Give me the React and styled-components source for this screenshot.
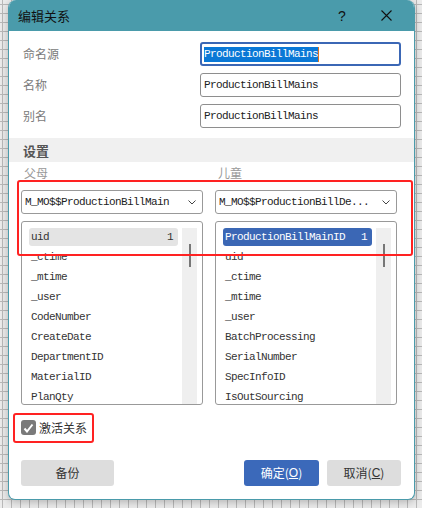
import React from "react";
import styled, { createGlobalStyle } from "styled-components";

const GlobalStyle = createGlobalStyle`
  html, body {
    margin: 0;
    padding: 0;
  }
  body {
    width: 422px;
    height: 508px;
    overflow: hidden;
    font-family: "Noto Sans CJK SC", "Noto Sans", sans-serif;
    background-color: #ececec;
    background-image:
      linear-gradient(to right, #b9b9b9 1px, transparent 1px),
      linear-gradient(to bottom, #b9b9b9 1px, transparent 1px);
    background-size: 9px 9px;
    background-position: 2px 4px;
  }
`;

const mono = `"Liberation Mono", "DejaVu Sans Mono", monospace`;

const Desktop = styled.div`
  width: 422px;
  height: 508px;
  padding-left: 8px;
  box-sizing: border-box;
`;

const Dialog = styled.div`
  position: relative;
  width: 407px;
  height: 500px;
  box-sizing: border-box;
  background: #fff;
  border: 1px solid #4a9bab;
  border-top: none;
  border-radius: 8px 8px 7px 7px;
  box-shadow: 0 2px 8px rgba(0, 0, 0, 0.25);
  display: flex;
  flex-direction: column;
  overflow: hidden;
`;

const TitleBar = styled.div`
  height: 31px;
  flex: none;
  background: #4a9bab;
  display: flex;
  align-items: center;
  padding: 0 16px 0 9px;
  font-size: 13px;
  line-height: 1;
  color: #111;
`;

const Title = styled.div`
  flex: 1;
`;

const TitleButton = styled.div`
  width: 24px;
  display: flex;
  justify-content: center;
  margin-left: ${({ $gap }) => $gap}px;
  font-family: "Liberation Sans", sans-serif;
  font-size: 14px;
`;

const Fields = styled.div`
  display: flex;
  flex-direction: column;
  gap: 7px;
  padding: 11px 13px 10px 14px;
`;

const FieldRow = styled.div`
  display: flex;
  align-items: center;
  height: 24px;
`;

const Label = styled.div`
  flex: 1;
  font-size: 12px;
  line-height: 1;
  color: #7a7a7a;
`;

const TextBox = styled.div`
  width: 201px;
  height: 24px;
  box-sizing: border-box;
  border: ${({ $focused }) => ($focused ? "2px solid #3b67b5" : "1px solid #8e8e8e")};
  border-radius: 3px;
  display: flex;
  align-items: center;
  padding-left: ${({ $focused }) => ($focused ? 2 : 3)}px;
  font-family: ${mono};
  font-size: 11px;
  letter-spacing: -0.6px;
  color: #222;
`;

const Selected = styled.span`
  background: #0a78d6;
  color: #fff;
  border-right: 1px solid #e0741e;
  line-height: 15px;
`;

const SectionHeader = styled.div`
  height: 24px;
  background: #f0f0f0;
  display: flex;
  align-items: center;
  padding-left: 14px;
  font-size: 13px;
  line-height: 1;
  font-weight: bold;
  color: #555;
`;

const Columns = styled.div`
  display: grid;
  grid-template-columns: 182px 182px;
  column-gap: 12px;
  padding: 3px 0 0 12px;
`;

const Column = styled.div`
  display: flex;
  flex-direction: column;
`;

const ColumnLabel = styled.div`
  height: 25px;
  font-size: 12px;
  color: #999;
  padding-left: 3px;
  line-height: 16px;
`;

const Select = styled.div`
  height: 24px;
  box-sizing: border-box;
  border: 1px solid #999;
  border-radius: 3px;
  display: flex;
  align-items: center;
  padding: 0 6px 0 3px;
  font-family: ${mono};
  font-size: 11px;
  letter-spacing: -0.6px;
  color: #222;
`;

const SelectText = styled.div`
  flex: 1;
  white-space: nowrap;
`;

const ListBox = styled.div`
  margin-top: 7px;
  height: 184px;
  box-sizing: border-box;
  border: 1px solid #999;
  border-radius: 3px;
  display: flex;
  padding: 6px 5px 0 7px;
  gap: 4px;
  overflow: hidden;
`;

const Items = styled.div`
  width: 149px;
  display: flex;
  flex-direction: column;
  gap: 2px;
`;

const Item = styled.div`
  height: 18px;
  flex: none;
  display: flex;
  align-items: center;
  justify-content: space-between;
  padding: 0 5px 0 2px;
  border-radius: 3px;
  font-family: ${mono};
  font-size: 11px;
  letter-spacing: -0.6px;
  background: ${({ $state }) =>
    $state === "active" ? "#3b67b5" : $state === "hover" ? "#e4e4e4" : "transparent"};
  color: ${({ $state }) => ($state === "active" ? "#fff" : "#333")};
`;

const Track = styled.div`
  width: 15px;
  background: #efefef;
  display: flex;
  justify-content: center;
  padding-top: 16px;
`;

const Thumb = styled.div`
  width: 2px;
  height: 23px;
  background: #777;
`;

const CheckRow = styled.div`
  display: flex;
  align-items: center;
  gap: 3px;
  padding: 15px 0 0 12px;
  font-size: 12px;
  line-height: 1;
  color: #333;
`;

const CheckBox = styled.div`
  width: 15px;
  height: 15px;
  border-radius: 3px;
  background: #7a7a7a;
  display: flex;
  align-items: center;
  justify-content: center;
`;

const Buttons = styled.div`
  display: flex;
  align-items: center;
  gap: 8px;
  padding: 25px 13px 0 12px;
`;

const Spacer = styled.div`
  flex: 1;
`;

const Button = styled.div`
  width: ${({ $w }) => $w}px;
  height: 26px;
  border-radius: 3px;
  display: flex;
  align-items: center;
  justify-content: center;
  font-size: 12px;
  line-height: 1;
  background: ${({ $primary }) => ($primary ? "#3b69ba" : "#dddddd")};
  color: ${({ $primary }) => ($primary ? "#fff" : "#333")};
`;

const Key = styled.span`
  text-decoration: underline;
  font-family: "Liberation Sans", sans-serif;
  font-size: 12px;
`;

const Highlight = styled.div`
  position: absolute;
  left: ${({ $x }) => $x}px;
  top: ${({ $y }) => $y}px;
  width: ${({ $w }) => $w}px;
  height: ${({ $h }) => $h}px;
  box-sizing: border-box;
  border: 2px solid #ff2222;
  border-radius: 3px;
  pointer-events: none;
`;

const parentItems = ["uid", "_ctime", "_mtime", "_user", "CodeNumber", "CreateDate", "DepartmentID", "MaterialID", "PlanQty"];
const childItems = ["ProductionBillMainID", "uid", "_ctime", "_mtime", "_user", "BatchProcessing", "SerialNumber", "SpecInfoID", "IsOutSourcing"];

function Chevron() {
  return (
    <svg width="8" height="5" viewBox="0 0 8 5">
      <path d="M0.5 0.5 L4 4 L7.5 0.5" fill="none" stroke="#444" strokeWidth="1" />
    </svg>
  );
}

function FieldList({ items, selectedState }) {
  return (
    <ListBox>
      <Items>
        {items.map((name, i) => (
          <Item key={name} $state={i === 0 ? selectedState : null}>
            <span>{name}</span>
            {i === 0 && <span>1</span>}
          </Item>
        ))}
      </Items>
      <Track>
        <Thumb />
      </Track>
    </ListBox>
  );
}

export default function App() {
  return (
    <>
      <GlobalStyle />
      <Desktop>
        <Dialog>
          <TitleBar>
            <Title>编辑关系</Title>
            <TitleButton>?</TitleButton>
            <TitleButton $gap={20}>
              <svg width="11" height="11" viewBox="0 0 11 11">
                <path d="M0.5 0.5 L10.5 10.5 M10.5 0.5 L0.5 10.5" stroke="#111" strokeWidth="1.1" />
              </svg>
            </TitleButton>
          </TitleBar>

          <Fields>
            <FieldRow>
              <Label>命名源</Label>
              <TextBox $focused>
                <Selected>ProductionBillMains</Selected>
              </TextBox>
            </FieldRow>
            <FieldRow>
              <Label>名称</Label>
              <TextBox>ProductionBillMains</TextBox>
            </FieldRow>
            <FieldRow>
              <Label>别名</Label>
              <TextBox>ProductionBillMains</TextBox>
            </FieldRow>
          </Fields>

          <SectionHeader>设置</SectionHeader>

          <Columns>
            <Column>
              <ColumnLabel>父母</ColumnLabel>
              <Select>
                <SelectText>M_MO$$ProductionBillMain</SelectText>
                <Chevron />
              </Select>
              <FieldList items={parentItems} selectedState="hover" />
            </Column>
            <Column>
              <ColumnLabel>儿童</ColumnLabel>
              <Select>
                <SelectText>M_MO$$ProductionBillDe...</SelectText>
                <Chevron />
              </Select>
              <FieldList items={childItems} selectedState="active" />
            </Column>
          </Columns>

          <CheckRow>
            <CheckBox>
              <svg width="11" height="10" viewBox="0 0 11 10">
                <path d="M1.5 5.5 L4 8.5 L9.5 1.5" fill="none" stroke="#fff" strokeWidth="2" />
              </svg>
            </CheckBox>
            激活关系
          </CheckRow>

          <Buttons>
            <Button $w={93}>备份</Button>
            <Spacer />
            <Button $w={75} $primary>
              确定(<Key>O</Key>)
            </Button>
            <Button $w={74}>
              取消(<Key>C</Key>)
            </Button>
          </Buttons>

          <Highlight $x={8} $y={180} $w={396} $h={76} />
          <Highlight $x={4} $y={413} $w={81} $h={30} />
        </Dialog>
      </Desktop>
    </>
  );
}
